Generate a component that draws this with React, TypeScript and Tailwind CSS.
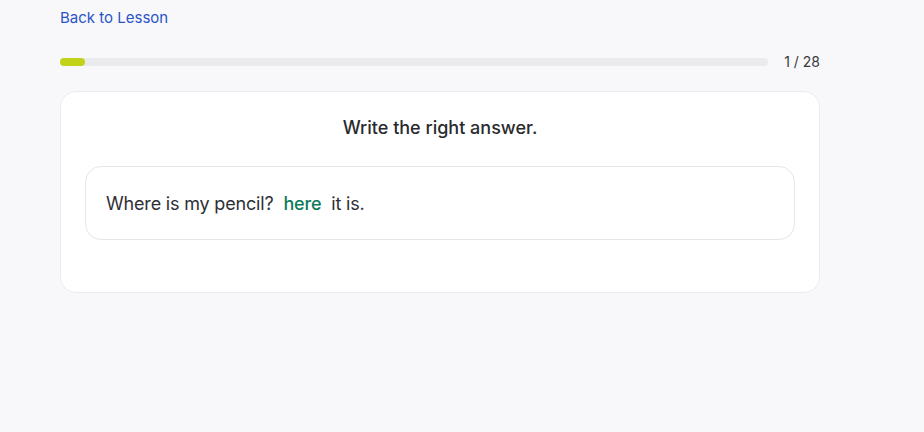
export default function App() {
  return (
    <div className="min-h-[432px] w-full bg-[#f8f8fa]" style={{ fontFamily: "Inter, 'Noto Sans', sans-serif" }}>
      <div className="ml-[60px] w-[760px] pt-[8px]">
        <a className="block text-[15px] leading-[20px] text-[#2a54c8]">Back to Lesson</a>
        <div className="mt-[24px] flex items-center gap-[16px]">
          <div className="h-[8px] flex-1 rounded-full bg-[#ebebee]">
            <div className="h-[8px] w-[25px] rounded-full bg-[#c1d218]" />
          </div>
          <span className="text-[14px] leading-[20px] text-[#3a3a3a]">1 / 28</span>
        </div>
        <div className="mt-[19px] rounded-[16px] border border-[#ececef] bg-white px-[24px] pb-[52px] pt-[24px]">
          <div className="text-center text-[18px] font-medium leading-[24px] text-[#2a2a2e]">Write the right answer.</div>
          <div className="mt-[26px] flex h-[74px] items-center rounded-[16px] border border-[#e6e6ea] px-[20px] text-[18px] tracking-[-0.01em] text-[#2f2f36]">
            <span>Where is my pencil?</span>
            <span className="mx-[10px] font-medium text-[#0f7a5a]">here</span>
            <span>it is.</span>
          </div>
        </div>
      </div>
    </div>
  );
}
